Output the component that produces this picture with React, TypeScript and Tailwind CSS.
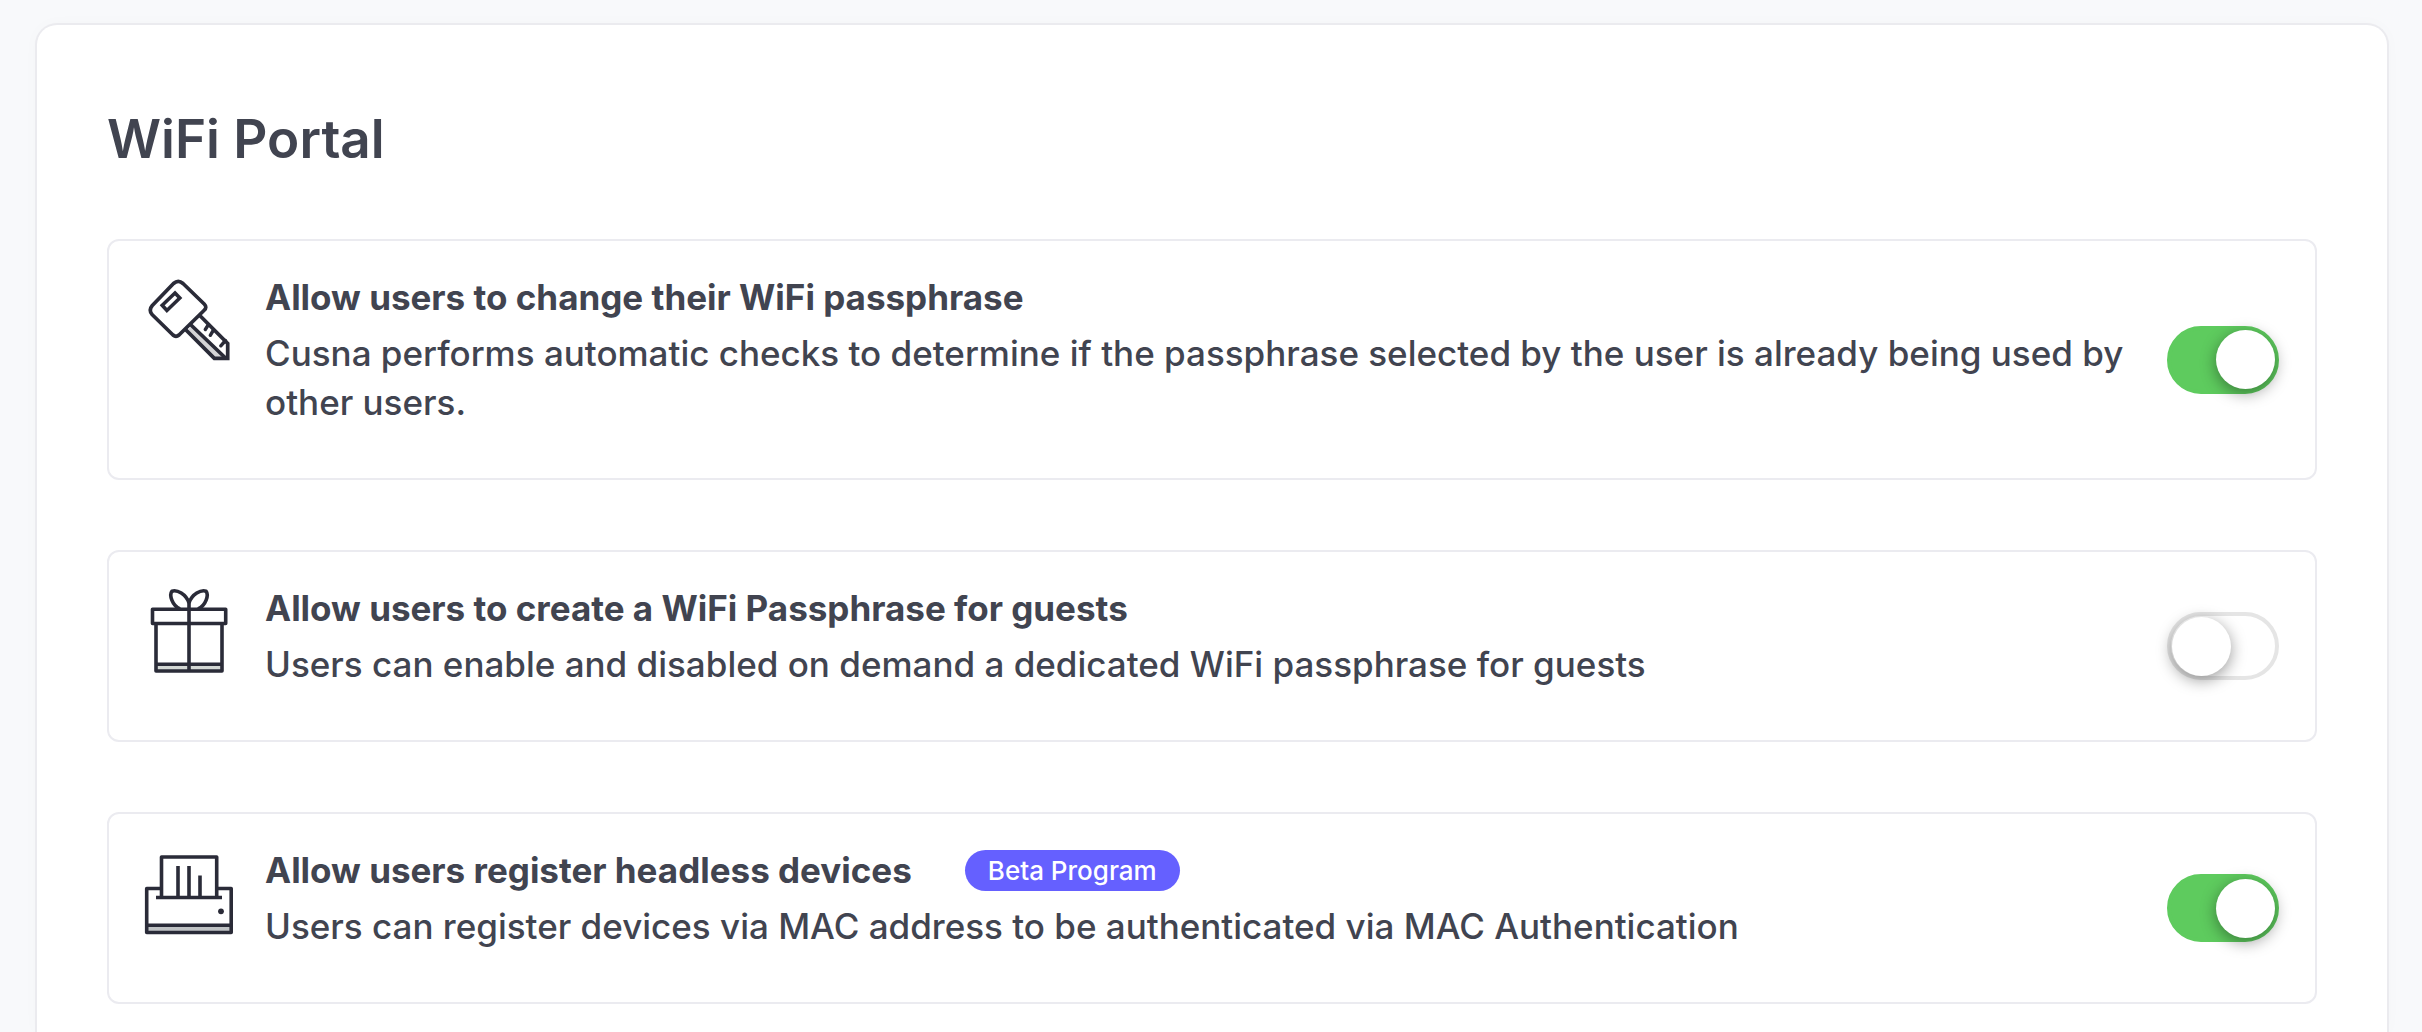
import { useId, useState, type ReactNode } from "react";

const ink = "#2a2b38";

function KeyIcon() {
  return (
    <svg viewBox="0 0 96 96" className="size-24 shrink-0" fill="none" stroke={ink} strokeWidth="3.7" strokeLinejoin="round" strokeLinecap="round" aria-hidden="true">
      <path d="M46 58 L50.5 53 L84 85 L73.5 85.5 Z" fill="#d4d4d6" stroke="none" />
      <path d="M58.3 42 L86.7 70.5 V85.4 H73.3 L45 57" strokeLinejoin="miter" />
      <path d="M50 52 L84 84.5" />
      <path d="M67.5 51.5 L64.3 56.5 M72.5 57 L69.3 62.3 M84.5 67.5 L79.8 72.8" strokeWidth="3.4" />
      <path d="M32.5 10.5 Q37.3 6.3 42 10.5 L63.2 31 Q66.4 34.3 63.2 37.2 L38 62 Q35 64.6 32 62 L11.3 41.8 Q7.2 37.2 11.3 32.5 Z" fill="#fff" />
      <path d="M34 20 L38.8 25 L25.9 37.5 L21.2 32.3 Z" strokeLinejoin="miter" strokeWidth="3.6" />
    </svg>
  );
}

function GiftIcon() {
  return (
    <svg viewBox="0 0 96 96" className="size-24 shrink-0" fill="none" stroke={ink} strokeWidth="3.6" strokeLinejoin="round" aria-hidden="true">
      <path d="M15 80.5 H81 V87 H15 Z" fill="#d3d7d4" stroke="none" />
      <path d="M11.5 25.2 H84.7 V39.5 H11.5 Z" />
      <path d="M15 39.5 V87 H81 V39.5 M15 80.3 H81" />
      <path d="M48 15 V87" />
      <path d="M48 19 C45 10 36 5.5 31 7.2 C28 11 31 21.5 39 25 M48 19 C51 10 60 5.5 65 7.2 C68 11 65 21.5 57 25" />
    </svg>
  );
}

function PrinterIcon() {
  return (
    <svg viewBox="0 0 96 96" className="size-24 shrink-0" fill="none" stroke={ink} strokeWidth="3.6" strokeLinejoin="round" aria-hidden="true">
      <path d="M5.5 79.5 H90.3 V86.5 H5.5 Z" fill="#bfc2c4" stroke="none" />
      <path d="M20.5 42.5 H5.7 V86.5 H90.2 V42.5 H75.7" />
      <path d="M5.7 79.3 H90.2" />
      <path d="M20.5 51.3 V11 H75.7 V51.3 M15 51.5 H81" />
      <path d="M37 20 V51 M48 20 V51 M59 29.5 V51" />
      <circle cx="80" cy="65.3" r="2.9" fill={ink} stroke="none" />
    </svg>
  );
}

type SettingProps = {
  icon: ReactNode;
  title: string;
  badge?: string;
  description: string;
  initial: boolean;
};

function Setting({ icon, title, badge, description, initial }: SettingProps) {
  const id = useId();
  const [on, setOn] = useState(initial);
  return (
    <section className="flex items-center rounded-[12px] border-2 border-[#ebebf0] pl-8 pr-9">
      <div className="flex flex-1 gap-7 self-stretch py-8">
        {icon}
        <div className="flex-1 pb-[19px]">
          <div className="flex items-center gap-[53px]">
            <label htmlFor={id} className="text-[35px] leading-[49px] font-bold">
              {title}
            </label>
            {badge && (
              <span className="rounded-full bg-[#6560ff] px-[23px] text-[26px] leading-[41px] font-medium text-white">{badge}</span>
            )}
          </div>
          <p id={`${id}-description`} className="mt-[7px] text-[35px] leading-[49px] font-medium">
            {description}
          </p>
        </div>
      </div>
      <input
        id={id}
        type="checkbox"
        role="switch"
        aria-describedby={`${id}-description`}
        checked={on}
        onChange={(event) => setOn(event.target.checked)}
        className="ml-5 flex h-[68px] w-28 shrink-0 cursor-pointer appearance-none items-center rounded-full border-4 border-[#e5e5e5] bg-white before:ml-px before:size-[59px] before:rounded-full before:bg-white before:shadow-[0_4px_16px_rgba(0,0,0,0.4)] checked:justify-end checked:border-[#5ecb5e] checked:bg-[#5ecb5e]"
      />
    </section>
  );
}

export default function App() {
  return (
    <div className="min-h-screen bg-[#f8f9fb] px-[35px] pt-[23px] pr-[33px] font-['Inter',sans-serif] text-[#414450]">
      <main className="min-h-[1009px] rounded-t-[22px] border-2 border-b-0 border-[#ebebef] bg-white px-[70px] pt-[82px] shadow-[0_0_16px_rgba(0,0,0,0.02)]">
        <h1 className="text-[53px] leading-[64px] font-semibold">WiFi Portal</h1>
        <div className="mt-[68px] flex flex-col gap-[70px]">
          <Setting
            icon={<KeyIcon />}
            title="Allow users to change their WiFi passphrase"
            description="Cusna performs automatic checks to determine if the passphrase selected by the user is already being used by other users."
            initial={true}
          />
          <Setting
            icon={<GiftIcon />}
            title="Allow users to create a WiFi Passphrase for guests"
            description="Users can enable and disabled on demand a dedicated WiFi passphrase for guests"
            initial={false}
          />
          <Setting
            icon={<PrinterIcon />}
            title="Allow users register headless devices"
            badge="Beta Program"
            description="Users can register devices via MAC address to be authenticated via MAC Authentication"
            initial={true}
          />
        </div>
      </main>
    </div>
  );
}
